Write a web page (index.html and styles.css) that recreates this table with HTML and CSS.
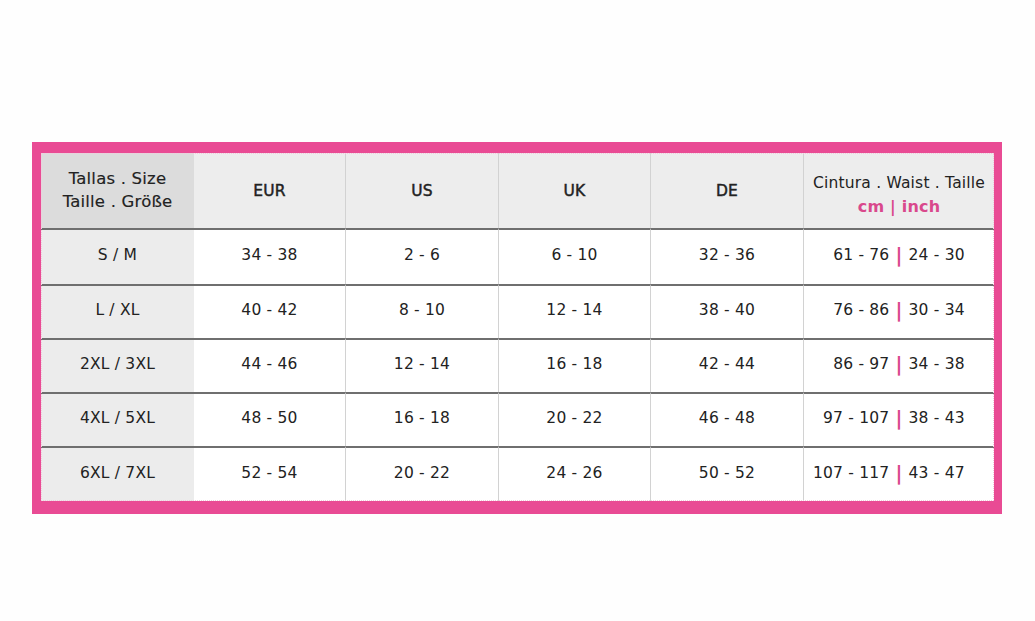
FILE: index.html
```html
<!DOCTYPE html>
<html>
<head>
<meta charset="utf-8">
<link rel="stylesheet" href="styles.css">
</head>
<body>
<div class="page">
  <div class="frame">
    <div class="chart">
      <div class="cell head first"><span>Tallas . Size<br>Taille . Größe</span></div>
      <div class="cell head">EUR</div>
      <div class="cell head sep">US</div>
      <div class="cell head sep">UK</div>
      <div class="cell head sep">DE</div>
      <div class="cell head sep waist-head"><span>Cintura . Waist . Taille<br><b class="pink">cm <span class="bar">|</span> inch</b></span></div>

      <div class="cell first line">S / M</div>
      <div class="cell line">34 - 38</div>
      <div class="cell line sep">2 - 6</div>
      <div class="cell line sep">6 - 10</div>
      <div class="cell line sep">32 - 36</div>
      <div class="cell line sep waist"><span class="l">61 - 76</span><span class="bar">|</span><span class="r">24 - 30</span></div>

      <div class="cell first line">L / XL</div>
      <div class="cell line">40 - 42</div>
      <div class="cell line sep">8 - 10</div>
      <div class="cell line sep">12 - 14</div>
      <div class="cell line sep">38 - 40</div>
      <div class="cell line sep waist"><span class="l">76 - 86</span><span class="bar">|</span><span class="r">30 - 34</span></div>

      <div class="cell first line">2XL / 3XL</div>
      <div class="cell line">44 - 46</div>
      <div class="cell line sep">12 - 14</div>
      <div class="cell line sep">16 - 18</div>
      <div class="cell line sep">42 - 44</div>
      <div class="cell line sep waist"><span class="l">86 - 97</span><span class="bar">|</span><span class="r">34 - 38</span></div>

      <div class="cell first line">4XL / 5XL</div>
      <div class="cell line">48 - 50</div>
      <div class="cell line sep">16 - 18</div>
      <div class="cell line sep">20 - 22</div>
      <div class="cell line sep">46 - 48</div>
      <div class="cell line sep waist"><span class="l">97 - 107</span><span class="bar">|</span><span class="r">38 - 43</span></div>

      <div class="cell first line">6XL / 7XL</div>
      <div class="cell line">52 - 54</div>
      <div class="cell line sep">20 - 22</div>
      <div class="cell line sep">24 - 26</div>
      <div class="cell line sep">50 - 52</div>
      <div class="cell line sep waist"><span class="l">107 - 117</span><span class="bar">|</span><span class="r">43 - 47</span></div>
    </div>
  </div>
</div>
</body>
</html>
```

FILE: styles.css
```css
* { box-sizing: border-box; }
html, body {
  margin: 0;
  padding: 0;
  background: #fefefe;
}
body {
  font-family: "DejaVu Sans", "Liberation Sans", sans-serif;
  color: #222;
}
.page {
  width: 1035px;
  height: 621px;
  padding: 142px 0 0 32px;
}
.frame {
  width: 970px;
  height: 372px;
  background: #e94b94;
  padding: 11px 8px 13px 9px;
}
.chart {
  display: grid;
  grid-template-columns: 153px 151px 153px 152px 153px 191px;
  grid-template-rows: 75px 56px 54px 54px 54px 55px;
  background: #fff;
  outline: 1px dotted #f3c9dc;
  outline-offset: -1px;
}
.cell {
  display: flex;
  align-items: center;
  justify-content: center;
  text-align: center;
  font-size: 15.5px;
  letter-spacing: 0.2px;
  background: #fff;
}
.head {
  background: #ededed;
  font-weight: normal;
  font-size: 15.5px;
  -webkit-text-stroke: 0.45px #222;
}
.head.first {
  background: #dcdcdc;
}
.head.first span {
  font-size: 16.5px;
  -webkit-text-stroke: 0.15px #222;
  line-height: 23px;
  padding-bottom: 2px;
}
.waist-head {
  padding-top: 10px;
}
.waist-head span {
  font-size: 15.5px;
  -webkit-text-stroke: 0;
  line-height: 23px;
}
.first { background: #ececec; }
.sep { border-left: 1px solid #d2d2d2; }
.line {
  border-top: 2px solid #6f6f6f;
  padding-bottom: 4px;
}
.pink {
  color: #d9488c;
  font-weight: bold;
  font-size: 16px;
  -webkit-text-stroke: 0;
}
.bar { color: #d9488c; font-weight: bold; }
.waist {
  display: grid;
  grid-template-columns: 1fr auto 1fr;
  column-gap: 6px;
  align-items: center;
}
.waist .l { text-align: right; }
.waist .r { text-align: left; }
.waist .bar { font-size: 19px; line-height: 20px; }
```
